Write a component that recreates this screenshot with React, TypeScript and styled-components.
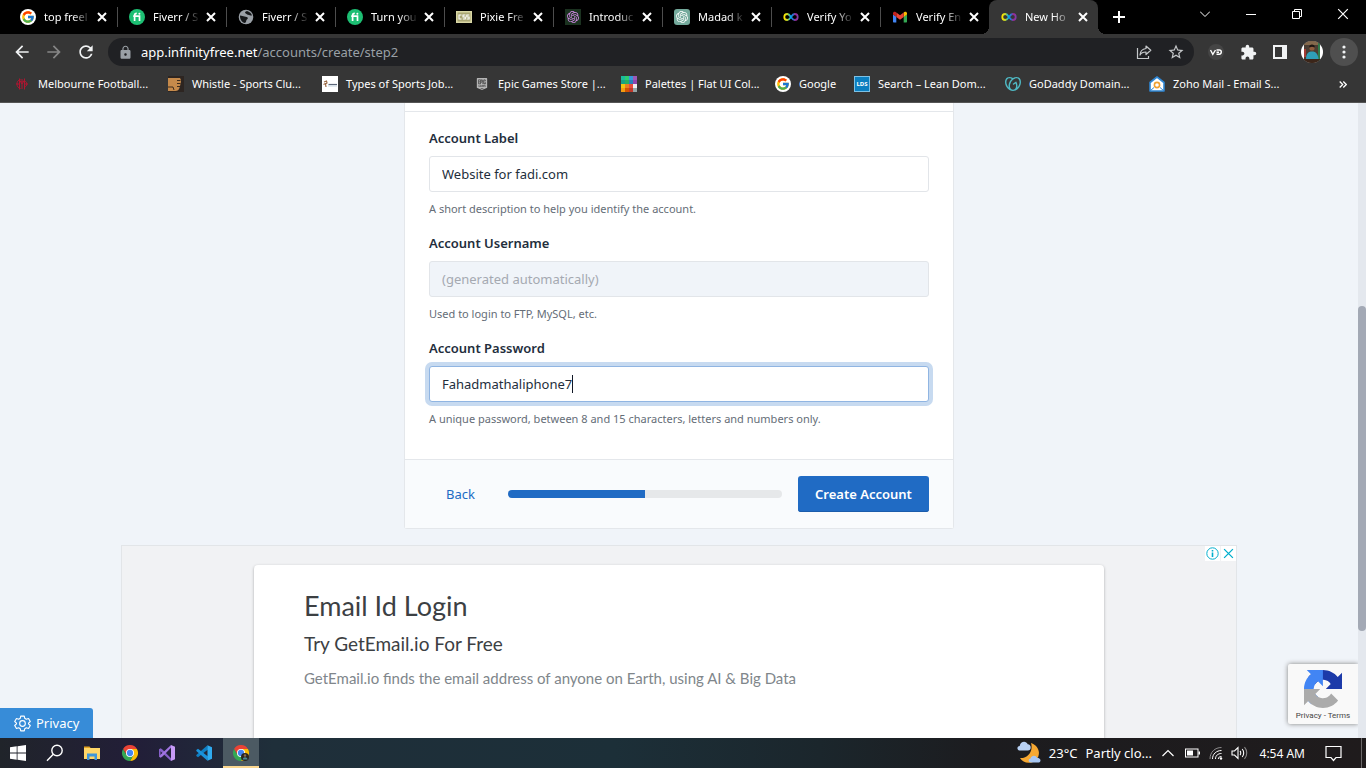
import React from "react";
import styled, { createGlobalStyle, css } from "styled-components";
import { FcGoogle } from "react-icons/fc";
import { SiOpenai, SiGodaddy, SiEpicgames } from "react-icons/si";
import { MdArrowBack, MdArrowForward, MdRefresh, MdLock, MdExtension, MdStarBorder } from "react-icons/md";

const ui = `"Noto Sans", "Open Sans", sans-serif`;

const GlobalStyle = createGlobalStyle`
  *, *::before, *::after { box-sizing: border-box; }
  body { margin: 0; font-family: ${ui}; }
  button, input { font: inherit; color: inherit; }
  button { border: 0; padding: 0; background: none; cursor: pointer; }
  a { color: inherit; text-decoration: none; }
  svg { display: block; flex: none; }
  h2, h3, p { margin: 0; font-weight: 400; }
`;

/* ---------- layout ---------- */

const Desktop = styled.div`
  display: flex;
  flex-direction: column;
  height: 100vh;
  overflow: hidden;
`;

const TabStrip = styled.div`
  display: flex;
  flex: none;
  height: 34px;
  padding-left: 8px;
  background: #000;
  color: #fff;
`;

const TabItem = styled.div<{ $active?: boolean; $plain?: boolean }>`
  position: relative;
  display: flex;
  align-items: center;
  flex: 0 1 109px;
  min-width: 0;
  padding: 0 8px 0 12px;
  ${(p) =>
    p.$active
      ? css`
          background: #363636;
          border-radius: 8px 8px 0 0;
          &::before, &::after {
            content: "";
            position: absolute;
            bottom: 0;
            width: 8px;
            height: 8px;
          }
          &::before { left: -8px; background: radial-gradient(circle at 0 0, transparent 8px, #363636 8px); }
          &::after { right: -8px; background: radial-gradient(circle at 100% 0, transparent 8px, #363636 8px); }
        `
      : css`
          &::after {
            content: "";
            position: absolute;
            right: -1px;
            top: 7px;
            width: 1px;
            height: 20px;
            background: ${p.$plain ? "transparent" : "#4d4d4d"};
          }
        `}
`;

const TabTitle = styled.span`
  flex: 1;
  min-width: 0;
  margin: 0 4px 0 8px;
  white-space: nowrap;
  font-size: 11px;
  line-height: 18px;
  mask-image: linear-gradient(to right, #000 60%, transparent 100%);
`;

const IconButton = styled.button<{ $w?: number; $h?: number }>`
  display: grid;
  place-items: center;
  flex: none;
  width: ${(p) => p.$w ?? 32}px;
  height: ${(p) => p.$h ?? 28}px;
`;

const WindowControls = styled.div`
  display: flex;
  margin-left: auto;
`;

const Toolbar = styled.div`
  display: flex;
  align-items: center;
  flex: none;
  height: 36px;
  padding: 0 6px;
  background: #363636;
  color: #f1f3f4;
`;

const AddressBar = styled.div`
  display: flex;
  align-items: center;
  flex: 1;
  min-width: 0;
  height: 28px;
  margin: 0 6px;
  padding: 0 2px 0 10px;
  border-radius: 14px;
  background: #202124;
`;

const Url = styled.div`
  flex: 1;
  min-width: 0;
  margin-left: 8px;
  overflow: hidden;
  white-space: nowrap;
  font-size: 13px;
  line-height: 20px;
  color: #9aa0a6;
  b { font-weight: 400; color: #fff; }
`;

const MenuDot = styled.span`
  display: grid;
  place-items: center;
  width: 28px;
  height: 28px;
  border-radius: 50%;
  background: #4f4f4f;
`;

const Bookmarks = styled.nav`
  display: flex;
  align-items: center;
  flex: none;
  height: 33px;
  padding: 0 7px 4px 14px;
  background: #363636;
  border-bottom: 1px solid #555;
  color: #fff;
  font-size: 11px;
  line-height: 18px;
`;

const Bookmark = styled.a<{ $w: number }>`
  display: flex;
  align-items: center;
  gap: 8px;
  flex: 0 1 ${(p) => p.$w}px;
  white-space: nowrap;
`;

const Viewport = styled.div`
  display: flex;
  flex: 1;
  min-height: 0;
  background: #f0f4f9;
`;

const Page = styled.main`
  position: relative;
  display: flex;
  flex-direction: column;
  align-items: center;
  flex: 1;
  min-width: 0;
  overflow: hidden;
`;

const ScrollTrack = styled.div`
  display: flex;
  flex-direction: column;
  flex: none;
  width: 8px;
  background: #e4e8ee;
  &::before { content: ""; flex: 203; }
  &::after { content: ""; flex: 107; }
`;

const ScrollThumb = styled.div`
  flex: 325;
  border-radius: 4px;
  background: #a3a9b5;
`;

/* ---------- form ---------- */

const FormCard = styled.form`
  flex: none;
  width: 100%;
  max-width: 550px;
  border: 1px solid #e4e7eb;
  border-top: 0;
  border-radius: 0 0 3px 3px;
  background: #fff;
  color: #232e3c;
  font-size: 14px;
  line-height: 20px;
`;

const CardTop = styled.div`
  height: 9px;
  border-bottom: 1px solid #e4e7eb;
`;

const CardBody = styled.div`
  padding: 16px 24px;
`;

const Field = styled.div`
  margin-bottom: 16px;
`;

const FieldLabel = styled.label`
  display: block;
  margin-bottom: 8px;
  font-size: 13px;
  font-weight: 600;
`;

const InputWrap = styled.div`
  position: relative;
`;

const TextInput = styled.input<{ $focused?: boolean }>`
  display: block;
  width: 100%;
  height: 36px;
  padding: 0 12px;
  border: 1px solid ${(p) => (p.$focused ? "#90b5e2" : "#e2e5e9")};
  border-radius: 3px;
  background: #fff;
  font-size: 13px;
  outline: 0;
  box-shadow: ${(p) => (p.$focused ? "0 0 0 4px #c7daf0" : "none")};
  &:disabled { background: #f0f4f9; }
  &::placeholder { color: #a5a9b1; opacity: 1; }
`;

const Caret = styled.span`
  position: absolute;
  left: 143px;
  top: 9px;
  width: 1px;
  height: 18px;
  background: #111827;
`;

const Hint = styled.p`
  margin-top: 8px;
  font-size: 11px;
  line-height: 17px;
  color: #656d77;
`;

const CardFooter = styled.div`
  display: flex;
  align-items: center;
  gap: 16px;
  padding: 16px 24px;
  border-top: 1px solid #e4e7eb;
  background: #f9fbfd;
`;

const BackLink = styled.a`
  width: 63px;
  padding: 8px 0;
  font-size: 13px;
  text-align: center;
  color: #206bc4;
`;

const Progress = styled.div`
  flex: 1;
  height: 8px;
  border-radius: 4px;
  overflow: hidden;
  background: #e6e8ea;
`;

const ProgressBar = styled.div`
  height: 100%;
  background: #206bc4;
`;

const SubmitButton = styled.button`
  flex: none;
  width: 131px;
  height: 36px;
  border-radius: 3px;
  background: #206bc4;
  color: #fff;
  font-size: 13px;
  font-weight: 600;
  white-space: nowrap;
  box-shadow: inset 0 -1px 0 #1b5cab;
`;

/* ---------- advert ---------- */

const Ad = styled.section`
  position: relative;
  display: flex;
  justify-content: center;
  flex: 1;
  width: calc(100% - 24px);
  max-width: 1116px;
  margin-top: 16px;
  padding-top: 19px;
  border: 1px solid #e2e5e8;
  border-bottom: 0;
  background: #f1f2f4;
`;

const AdCard = styled.a`
  display: block;
  width: 100%;
  max-width: 850px;
  padding: 23px 50px;
  border-radius: 4px 4px 0 0;
  background: #fff;
  box-shadow: 0 1px 3px rgba(0, 0, 0, 0.3);
  font-family: Lato, sans-serif;
  color: #3c4043;
`;

const AdTitle = styled.h2`
  font-size: 27px;
  line-height: 36px;
`;

const AdSubtitle = styled.h3`
  margin-top: 8px;
  font-size: 19px;
  line-height: 24px;
`;

const AdText = styled.p`
  margin-top: 12px;
  font-size: 15px;
  line-height: 20px;
  color: #80868b;
`;

const AdTools = styled.div`
  position: absolute;
  top: 0;
  right: 0;
  display: flex;
  gap: 1px;
`;

const AdTool = styled.button`
  display: grid;
  place-items: center;
  width: 15px;
  height: 15px;
  background: #fff;
`;

/* ---------- floating widgets ---------- */

const PrivacyButton = styled.button`
  position: absolute;
  left: 0;
  bottom: 0;
  display: flex;
  align-items: center;
  gap: 5px;
  height: 30px;
  padding: 0 14px;
  border-radius: 0 3px 0 0;
  background: #378cd8;
  color: #fff;
  font-size: 13px;
`;

const Recaptcha = styled.div`
  position: absolute;
  right: 0;
  bottom: 14px;
  display: flex;
  flex-direction: column;
  align-items: center;
  width: 70px;
  height: 60px;
  padding-top: 6px;
  border-radius: 2px 0 0 2px;
  background: #f9f9f9;
  box-shadow: 0 0 5px #808080;
  font-family: Roboto, sans-serif;
  font-size: 8px;
  line-height: 12px;
  color: #444;
  p { margin-top: 2px; }
`;

/* ---------- taskbar ---------- */

const Taskbar = styled.footer`
  display: flex;
  flex: none;
  height: 30px;
  color: #fff;
  background: linear-gradient(to right, #20242a 0, #221e38 10%, #1f2f3a 20%, #1c2f38 45%, #1b262c 60%, #1c1c1f 72%, #1f1b1c 100%);
`;

const TaskButton = styled.button<{ $w: number; $active?: boolean }>`
  display: grid;
  place-items: center;
  flex: none;
  width: ${(p) => p.$w}px;
  background: ${(p) => (p.$active ? "#4c5a63" : "none")};
  box-shadow: ${(p) => (p.$active ? "inset 0 -2px 0 #fcd890" : "none")};
`;

const Tray = styled.div`
  display: flex;
  align-items: center;
  margin-left: auto;
  padding-right: 4px;
`;

const Weather = styled.button`
  display: flex;
  align-items: center;
  gap: 8px;
  margin-right: 4px;
  font-size: 13px;
  white-space: nowrap;
`;

const Clock = styled.time`
  width: 54px;
  font-size: 12px;
  text-align: right;
  white-space: nowrap;
`;

const ShowDesktop = styled.span`
  width: 1px;
  height: 30px;
  background: #6b6869;
`;

/* ---------- icons ---------- */

const GoogleIcon = () => (
  <svg width="16" height="16" viewBox="0 0 16 16">
    <circle cx="8" cy="8" r="8" fill="#fff" />
    <FcGoogle x="1" y="1" size={14} />
  </svg>
);

const FiverrIcon = () => (
  <svg width="16" height="16" viewBox="0 0 16 16">
    <circle cx="8" cy="8" r="8" fill="#1dbf73" />
    <path d="M5.600 12V6.200c0-1.300.8-1.900 2.200-1.900M4.200 7.200h6.300V12" fill="none" stroke="#fff" strokeWidth="1.700" />
    <circle cx="10.400" cy="4.700" r="1" fill="#fff" />
  </svg>
);

const GlobeIcon = () => (
  <svg width="16" height="16" viewBox="0 0 16 16">
    <circle cx="8" cy="8" r="7.300" fill="#9aa0a6" />
    <path
      d="M2 6.500c2 .2 3 .8 4.500 1 1.500.3 3 .3 3.300 1.500.2 1.300-1.300 1.300-1.500 2.500-.1 1 -.6 2-1.300 2.500C4 13.500 1.800 10.500 2 6.500zM9 2c-1.800.5-2.500 1.500-1.500 2.300.8.600 1.300 1.200 2.500 1.500 1.500.2 2.500.9 4 .7C13.500 4.500 11.500 2.500 9 2z"
      fill="#16181a"
    />
  </svg>
);

const CssIcon = () => (
  <svg width="16" height="12" viewBox="0 0 16 12">
    <rect width="16" height="12" fill="#d9d7a5" />
    <rect x="1.500" y="1.500" width="13" height="9" fill="#a9a673" />
    <path d="M5.500 4H3v4h2.500M9.500 4H7v2h2.300v2H6.800M13.300 4h-2.500v2h2.300v2h-2.500" fill="none" stroke="#fff" strokeWidth="1.100" />
  </svg>
);

const AiIcon = ({ bg, fg, round }: { bg: string; fg: string; round?: boolean }) => (
  <svg width="16" height="16" viewBox="0 0 16 16">
    <rect width="16" height="16" rx={round ? 3 : 0} fill={bg} />
    <SiOpenai x="2" y="2" size={12} color={fg} />
  </svg>
);

const InfinityIcon = ({ id }: { id: string }) => (
  <svg width="16" height="16" viewBox="0 0 16 16">
    <defs>
      <linearGradient id={id} x1="0" x2="1" y1="0" y2="0">
        <stop offset="0" stopColor="#ffe600" />
        <stop offset="0.250" stopColor="#b8d432" />
        <stop offset="0.450" stopColor="#00aeef" />
        <stop offset="0.650" stopColor="#2e6fd0" />
        <stop offset="0.850" stopColor="#a3238e" />
        <stop offset="1" stopColor="#7d3fa8" />
      </linearGradient>
    </defs>
    <path
      d="M8 8C6.700 6 5.700 5 4.300 5a3 3 0 0 0 0 6C5.700 11 6.700 10 8 8s2.300-3 3.700-3a3 3 0 0 1 0 6C10.300 11 9.300 10 8 8z"
      fill="none"
      stroke={`url(#${id})`}
      strokeWidth="1.800"
    />
  </svg>
);

const GmailIcon = () => (
  <svg width="16" height="16" viewBox="0 0 16 16">
    <path d="M1 5.500v7c0 .6.400 1 1 1h2.300V7.500z" fill="#4285f4" />
    <path d="M15 5.500v7c0 .6-.4 1-1 1h-2.300V7.500z" fill="#34a853" />
    <path d="M11.700 3.500v4.500L15 5.500V4.300c0-1.500-1.500-2.100-2.600-1.300z" fill="#fbbc04" />
    <path d="M4.300 8V3.500L8 6.300l3.700-2.800V8L8 10.800z" fill="#ea4335" />
    <path d="M1 4.300v1.200L4.300 8V3.500L3.600 3C2.500 2.200 1 2.800 1 4.300z" fill="#c5221f" />
  </svg>
);

const CloseIcon = ({ size = 10, w = 2, color = "#fff" }: { size?: number; w?: number; color?: string }) => (
  <svg width={size} height={size} viewBox="0 0 10 10">
    <path d="M1 1l8 8M9 1L1 9" stroke={color} strokeWidth={w} fill="none" />
  </svg>
);

const MelbourneIcon = () => (
  <svg width="16" height="16" viewBox="0 0 16 16" fill="none" stroke="#b01530" strokeWidth="1">
    <path d="M6.500 3.500C4 4 3 6 3 8s1 4 3.500 4.500M5.500 2.500v11M10.500 2.500v11M5.500 4L8 8l2.500-4M8 5v8M10.500 5c3 .5 3 5.500 0 6M2 8h3.500M10.500 8H14M8 3v3" />
  </svg>
);

const WhistleIcon = () => (
  <svg width="16" height="16" viewBox="0 0 16 16">
    <rect width="16" height="16" fill="#2d2521" />
    <path d="M0 2h12c1.500 2 1 4 .5 6s-.5 3-1.500 5-3 2-5 2H0z" fill="#c58a4b" />
    <path d="M0 11h5l1 3M9 4.500h3.500M9 7.500h3.500M9 10.500h3" stroke="#1c1512" fill="none" strokeWidth=".8" />
  </svg>
);

const SportsJobIcon = () => (
  <svg width="16" height="16" viewBox="0 0 16 16">
    <rect width="16" height="16" fill="#fff" />
    <path d="M2 6l2.500-1L5 7 3.500 8 4 11M1.500 8.500l2-1" stroke="#9b6a45" fill="none" strokeWidth="1.200" />
    <path d="M6.500 8.500h8.500" stroke="#5c6678" strokeWidth="1.200" />
    <path d="M6 10h9" stroke="#b9cbda" strokeWidth=".8" />
  </svg>
);

const swatches = [
  "#1abc9c", "#2ecc71", "#3498db", "#9b59b6",
  "#16a085", "#27ae60", "#2980b9", "#8e44ad",
  "#f1c40f", "#e67e22", "#e74c3c", "#ecf0f1",
  "#f39c12", "#d35400", "#c0392b", "#95a5a6",
];

const PaletteIcon = () => (
  <svg width="16" height="16" viewBox="0 0 16 16">
    {swatches.map((c, i) => (
      <rect key={c} x={(i % 4) * 4} y={Math.floor(i / 4) * 4} width="4" height="4" fill={c} />
    ))}
  </svg>
);

const Lds = styled.span`
  display: grid;
  place-items: center;
  flex: none;
  width: 16px;
  height: 16px;
  border: 1px solid #7cc0e4;
  background: #0b7fc0;
  font-size: 6px;
  line-height: 8px;
  font-weight: 700;
`;

const ZohoIcon = () => (
  <svg width="16" height="16" viewBox="0 0 16 16">
    <path d="M1 6.500L8 1l7 5.500V15H1z" fill="#fff" stroke="#2f86d2" strokeWidth="1.600" strokeLinejoin="round" />
    <circle cx="8" cy="9" r="2.600" fill="none" stroke="#f0a030" strokeWidth="1.600" />
    <path d="M1.500 14.500L5 11.500M14.500 14.500L11 11.500" stroke="#2f86d2" />
  </svg>
);

const ShareIcon = () => (
  <svg width="16" height="16" viewBox="0 0 16 16" fill="none" stroke="#c4c7c9" strokeWidth="1.200">
    <path d="M1.500 4v10.500h11V12" />
    <path d="M10 2l4.800 4.300L10 10.500V8C7 8 5 9 4 11c.2-3.500 2.200-6 6-6.500z" strokeLinejoin="round" />
  </svg>
);

const VdIcon = () => (
  <svg width="16" height="16" viewBox="0 0 16 16">
    <circle cx="8" cy="8" r="8" fill="#454545" />
    <path d="M2.500 6l2.300 4.300L7.500 6M8.500 6h2.700c2.800 0 2.800 4.200 0 4.200H8.500M8.500 8.200h2.500" fill="none" stroke="#fff" strokeWidth="1.400" />
  </svg>
);

const PanelIcon = () => (
  <svg width="14" height="14" viewBox="0 0 14 14">
    <path d="M0 0h14v14H0zM2 2v10h7V2z" fill="#f1f3f4" fillRule="evenodd" />
  </svg>
);

const AvatarIcon = () => (
  <svg width="22" height="22" viewBox="0 0 22 22">
    <defs>
      <clipPath id="avatar"><circle cx="11" cy="11" r="11" /></clipPath>
    </defs>
    <g clipPath="url(#avatar)">
      <rect width="22" height="22" fill="#fff" />
      <rect x="3" width="16" height="22" fill="#4a3d33" />
      <path d="M3 0h16v4H3z" fill="#84694c" />
      <path d="M3 8h2v8H3z" fill="#a33b34" />
      <path d="M17 2h2v18h-2z" fill="#2f7a4a" />
      <circle cx="11" cy="7" r="2.600" fill="#8d5c3d" />
      <path d="M8.200 6.500c-.5-4 6-4 5.600 0l-2.800-.8z" fill="#1d1512" />
      <path d="M5 18c0-5 2-7.500 6-7.500s6 2.500 6.500 7.500z" fill="#2f9fb8" />
      <path d="M3 18h16v4H3z" fill="#3b2519" />
    </g>
  </svg>
);

const ChromeIcon = ({ badge }: { badge?: boolean }) => (
  <svg width="16" height="16" viewBox="1 1 22 22">
    <path d="M12 12V6.500h9.530A11 11 0 0 0 2.470 6.500l4.770 8.250z" fill="#ea4335" />
    <path d="M12 12V6.500h9.530A11 11 0 0 1 12 23l4.760-8.250z" fill="#fbbc05" />
    <path d="M12 12l-4.760 2.750L2.470 6.500A11 11 0 0 0 12 23l4.760-8.250z" fill="#34a853" />
    <circle cx="12" cy="12" r="5.500" fill="#fff" />
    <circle cx="12" cy="12" r="4.300" fill="#4285f4" />
    {badge && (
      <>
        <circle cx="17.500" cy="17.500" r="5.500" fill="#2a2622" />
        <circle cx="17.500" cy="15.500" r="1.700" fill="#8d6a50" />
        <path d="M14.500 21c0-4 6-4 6.500 0z" fill="#4b8794" />
      </>
    )}
  </svg>
);

const WindowsIcon = () => (
  <svg width="16" height="16" viewBox="0 0 16 16" fill="#fff">
    <path d="M0 2.200L6.700 1.300V7.600H0zM7.500 1.200L16 0v7.600H7.500zM0 8.400h6.700v6.300L0 13.800zM7.500 8.400H16V16l-8.500-1.200z" />
  </svg>
);

const SearchIcon = () => (
  <svg width="18" height="18" viewBox="0 0 18 18" fill="none" stroke="#fff" strokeWidth="1.400">
    <circle cx="11" cy="6.500" r="5.200" />
    <path d="M7.300 10.300L1 16.800" />
  </svg>
);

const FolderIcon = () => (
  <svg width="16" height="16" viewBox="0 0 16 16">
    <path d="M0 1.500h5.500l1.500 2H0z" fill="#e3a321" />
    <path d="M0 3h16v11H0z" fill="#ffd768" />
    <path d="M3 15V8.500h10V15h-2.500v-3.500h-5V15z" fill="#3f97d9" />
  </svg>
);

const VisualStudioIcon = () => (
  <svg width="16" height="16" viewBox="0 0 16 16">
    <path d="M0 4.300l1.700-1 2 1.400L12 13.200V16L1.500 6.200v3.900L0 11.700z" fill="#8660c9" />
    <path d="M0 11.700l1.700 1 2-1.400L12 2.800V0L1.500 9.800z" fill="#a074e0" />
    <path d="M12 0l4 1.800v12.400L12 16z" fill="#c79bf7" />
  </svg>
);

const VsCodeIcon = () => (
  <svg width="16" height="16" viewBox="0 0 16 16">
    <path d="M11.500 0.300L12 4.600 2 12.200.3 10.900v-.8z" fill="#0f7fc4" />
    <path d="M11.500 15.700L12 11.400 2 3.800.3 5.100v.8z" fill="#1a93dc" />
    <path d="M11.500.2L16 2.200v11.600l-4.500 2z" fill="#2fabf0" />
  </svg>
);

const WeatherIcon = () => (
  <svg width="24" height="24" viewBox="0 0 24 24">
    <path d="M14 2c8 2.500 10.500 11.500 5 17-5 4.500-13 3.500-16-2C11 17.500 16.500 10 14 2z" fill="#f6a832" />
    <path d="M3.500 9.500c-4 0-4-4.300-.8-4.600C3.500-.2 9.500-.3 10.700 3.300c4 0 4 6.200 0 6.200z" fill="#b9d2f5" />
    <path d="M14 21.500c-3 0-3-3.800-.4-4 .7-3.600 5.400-3.600 6.400-.8 4.500.2 4.500 4.800 1 4.800z" fill="#a7c6f2" />
  </svg>
);

const BatteryIcon = () => (
  <svg width="15" height="10" viewBox="0 0 15 10">
    <rect x="0.500" y="1" width="12.500" height="8" fill="none" stroke="#fff" />
    <rect x="2" y="2.500" width="6" height="5" fill="#fff" />
    <rect x="13.500" y="3.500" width="1.500" height="3" fill="#fff" />
  </svg>
);

const WifiIcon = () => (
  <svg width="14" height="14" viewBox="0 0 14 14" fill="none" stroke="#fff" strokeWidth="1">
    <path d="M1 13C1 6 6 1.500 12.500 1.500" stroke="#8d8b8c" />
    <path d="M3.500 13c0-5 4-8.500 9-8.500M6.500 13c0-3.500 2.500-5.500 6-5.500M9.300 13c0-1.700 1.200-2.500 3.200-2.500" />
    <circle cx="12" cy="12.500" r="1.200" fill="#fff" stroke="none" />
  </svg>
);

const VolumeIcon = () => (
  <svg width="17" height="14" viewBox="0 0 17 14" fill="none" stroke="#fff" strokeWidth="1.100">
    <path d="M1 5h2.500L7 1.500v11L3.500 9H1z" />
    <path d="M9 5c1 1 1 3 0 4M11.200 3c2 2.200 2 5.800 0 8" />
    <path d="M13.500 1.200c3 3.300 3 8.300 0 11.600" stroke="#8d8b8c" />
  </svg>
);

const NoticeIcon = () => (
  <svg width="17" height="17" viewBox="0 0 17 17" fill="none" stroke="#fff" strokeWidth="1.200">
    <path d="M1 1.500h15v11h-5l-2.500 3-2.500-3H1z" />
  </svg>
);

const GearIcon = () => (
  <svg width="17" height="17" viewBox="0 0 24 24" fill="none" stroke="#fff" strokeWidth="1.600" strokeLinejoin="round">
    <path d="M9.500 1.500h5l.7 3.200 2.100 1.200 3.200-1 2.500 4.300-2.500 2.200v1.200l2.500 2.200-2.500 4.300-3.200-1-2.100 1.200-.7 3.200h-5l-.7-3.200-2.100-1.200-3.200 1L1 14.800l2.500-2.200v-1.200L1 9.200l2.500-4.300 3.200 1 2.100-1.200z" />
    <circle cx="12" cy="12" r="4" />
  </svg>
);

const CaptchaIcon = () => (
  <svg width="38" height="38" viewBox="0 0 64 64">
    <path fill="#1c3aa9" d="M64 31.955l-.033-1.370V4.687l-7.160 7.160C50.948 4.674 42.033.093 32.050.093c-10.400 0-19.622 4.960-25.458 12.640l11.736 11.860a15.550 15.550 0 0 1 4.754-5.334c2.050-1.600 4.952-2.906 8.968-2.906.485 0 .860.057 1.135.163 4.976.393 9.288 3.140 11.828 7.124l-8.307 8.307L64 31.953" />
    <path fill="#4285f4" d="M31.862.094l-1.370.033H4.594l7.160 7.160C4.580 13.147 0 22.060 0 32.046c0 10.400 4.960 19.622 12.640 25.458L24.500 45.768a15.550 15.550 0 0 1-5.334-4.754c-1.600-2.050-2.906-4.952-2.906-8.968 0-.485.057-.860.163-1.135.393-4.976 3.140-9.288 7.124-11.828l8.307 8.307L31.860.095" />
    <path fill="#ababab" d="M.001 32.045l.033 1.370v25.898l7.160-7.160c5.860 7.173 14.774 11.754 24.760 11.754 10.400 0 19.622-4.960 25.458-12.640l-11.736-11.860a15.550 15.550 0 0 1-4.754 5.334c-2.050 1.600-4.952 2.906-8.968 2.906-.485 0-.860-.057-1.135-.163-4.976-.393-9.288-3.140-11.828-7.124l8.307-8.307c-10.522.040-22.400.066-27.295-.005" />
  </svg>
);

/* ---------- data ---------- */

const tabs = [
  { title: "top freel", icon: <GoogleIcon /> },
  { title: "Fiverr / S", icon: <FiverrIcon /> },
  { title: "Fiverr / S", icon: <GlobeIcon /> },
  { title: "Turn you", icon: <FiverrIcon /> },
  { title: "Pixie Fre", icon: <CssIcon /> },
  { title: "Introduc", icon: <AiIcon bg="#1b3220" fg="#d68bea" /> },
  { title: "Madad k", icon: <AiIcon bg="#74aa9c" fg="#fff" round /> },
  { title: "Verify Yo", icon: <InfinityIcon id="inf-a" /> },
  { title: "Verify En", icon: <GmailIcon /> },
  { title: "New Ho", icon: <InfinityIcon id="inf-b" /> },
];

const bookmarks = [
  { title: "Melbourne Football...", icon: <MelbourneIcon />, w: 154 },
  { title: "Whistle - Sports Clu...", icon: <WhistleIcon />, w: 154 },
  { title: "Types of Sports Job...", icon: <SportsJobIcon />, w: 152 },
  { title: "Epic Games Store |...", icon: <SiEpicgames size={12} color="#b5b5b5" style={{ width: 16 }} />, w: 147 },
  { title: "Palettes | Flat UI Col...", icon: <PaletteIcon />, w: 154 },
  { title: "Google", icon: <GoogleIcon />, w: 79 },
  { title: "Search – Lean Dom...", icon: <Lds>LDS</Lds>, w: 151 },
  { title: "GoDaddy Domain...", icon: <SiGodaddy size={16} color="#4fb9c4" />, w: 144 },
  { title: "Zoho Mail - Email S...", icon: <ZohoIcon />, w: 150 },
];

export default function App() {
  return (
    <>
      <GlobalStyle />
      <Desktop>
        <TabStrip>
          {tabs.map((t, i) => (
            <TabItem key={i} $active={i === 9} $plain={i === 8}>
              {t.icon}
              <TabTitle>{t.title}</TabTitle>
              <IconButton $w={14} $h={16} aria-label="Close tab">
                <CloseIcon />
              </IconButton>
            </TabItem>
          ))}
          <IconButton $w={42} $h={34} aria-label="New tab">
            <svg width="12" height="12" viewBox="0 0 12 12">
              <path d="M6 0v12M0 6h12" stroke="#fff" strokeWidth="2" />
            </svg>
          </IconButton>
          <WindowControls>
            <IconButton $w={46} aria-label="Search tabs">
              <svg width="10" height="10" viewBox="0 0 10 10">
                <path d="M0 2.500l5 5 5-5" stroke="#fff" fill="none" />
              </svg>
            </IconButton>
            <IconButton $w={46} aria-label="Minimize">
              <svg width="10" height="10" viewBox="0 0 10 10">
                <path d="M0 5.500h10" stroke="#fff" />
              </svg>
            </IconButton>
            <IconButton $w={46} aria-label="Restore">
              <svg width="10" height="10" viewBox="0 0 10 10">
                <path d="M.5 2.500h7v7h-7zM2.500 2.500v-2h7v7h-2" stroke="#fff" fill="none" />
              </svg>
            </IconButton>
            <IconButton $w={46} aria-label="Close window">
              <CloseIcon size={12} w={1} />
            </IconButton>
          </WindowControls>
        </TabStrip>

        <Toolbar>
          <IconButton aria-label="Back"><MdArrowBack size={20} /></IconButton>
          <IconButton aria-label="Forward"><MdArrowForward size={20} color="#868686" /></IconButton>
          <IconButton aria-label="Reload"><MdRefresh size={20} /></IconButton>
          <AddressBar>
            <MdLock size={15} color="#9aa0a6" />
            <Url><b>app.infinityfree.net</b>/accounts/create/step2</Url>
            <IconButton aria-label="Share"><ShareIcon /></IconButton>
            <IconButton aria-label="Bookmark"><MdStarBorder size={18} color="#c4c7c9" /></IconButton>
          </AddressBar>
          <IconButton aria-label="Extension"><VdIcon /></IconButton>
          <IconButton aria-label="Extensions"><MdExtension size={17} /></IconButton>
          <IconButton aria-label="Side panel"><PanelIcon /></IconButton>
          <IconButton aria-label="Profile"><AvatarIcon /></IconButton>
          <IconButton aria-label="Menu">
            <MenuDot>
              <svg width="4" height="14" viewBox="0 0 4 14" fill="#f1f3f4">
                <circle cx="2" cy="2" r="1.600" />
                <circle cx="2" cy="7" r="1.600" />
                <circle cx="2" cy="12" r="1.600" />
              </svg>
            </MenuDot>
          </IconButton>
        </Toolbar>

        <Bookmarks>
          {bookmarks.map((b) => (
            <Bookmark key={b.title} href="#" $w={b.w}>
              {b.icon}
              {b.title}
            </Bookmark>
          ))}
          <WindowControls>
            <IconButton aria-label="More bookmarks">
              <svg width="8" height="7" viewBox="0 0 8 7">
                <path d="M.7.5l3 3-3 3M4.300.5l3 3-3 3" stroke="#fff" strokeWidth="1.300" fill="none" />
              </svg>
            </IconButton>
          </WindowControls>
        </Bookmarks>

        <Viewport>
          <Page>
            <FormCard onSubmit={(e) => e.preventDefault()}>
              <CardTop />
              <CardBody>
                <Field>
                  <FieldLabel htmlFor="label">Account Label</FieldLabel>
                  <TextInput id="label" type="text" defaultValue="Website for fadi.com" />
                  <Hint>A short description to help you identify the account.</Hint>
                </Field>
                <Field>
                  <FieldLabel htmlFor="username">Account Username</FieldLabel>
                  <TextInput id="username" type="text" placeholder="(generated automatically)" disabled />
                  <Hint>Used to login to FTP, MySQL, etc.</Hint>
                </Field>
                <Field>
                  <FieldLabel htmlFor="password">Account Password</FieldLabel>
                  <InputWrap>
                    <TextInput id="password" type="text" defaultValue="Fahadmathaliphone7" $focused />
                    <Caret />
                  </InputWrap>
                  <Hint>A unique password, between 8 and 15 characters, letters and numbers only.</Hint>
                </Field>
              </CardBody>
              <CardFooter>
                <BackLink href="#">Back</BackLink>
                <Progress>
                  <ProgressBar style={{ width: "50%" }} />
                </Progress>
                <SubmitButton type="submit">Create Account</SubmitButton>
              </CardFooter>
            </FormCard>

            <Ad>
              <AdCard href="#">
                <AdTitle>Email Id Login</AdTitle>
                <AdSubtitle>Try GetEmail.io For Free</AdSubtitle>
                <AdText>GetEmail.io finds the email address of anyone on Earth, using AI &amp; Big Data</AdText>
              </AdCard>
              <AdTools>
                <AdTool aria-label="Ad information">
                  <svg width="13" height="13" viewBox="0 0 13 13">
                    <circle cx="6.500" cy="6.500" r="5.700" fill="none" stroke="#00aecd" />
                    <path d="M6.500 5.500v4.500M6.500 3v1.500" stroke="#00aecd" strokeWidth="1.600" />
                  </svg>
                </AdTool>
                <AdTool aria-label="Close ad">
                  <CloseIcon size={11} w={1.2} color="#00aecd" />
                </AdTool>
              </AdTools>
            </Ad>

            <PrivacyButton>
              <GearIcon />
              Privacy
            </PrivacyButton>
            <Recaptcha>
              <CaptchaIcon />
              <p><a href="#">Privacy</a> - <a href="#">Terms</a></p>
            </Recaptcha>
          </Page>
          <ScrollTrack>
            <ScrollThumb />
          </ScrollTrack>
        </Viewport>

        <Taskbar>
          <TaskButton $w={36} aria-label="Start"><WindowsIcon /></TaskButton>
          <TaskButton $w={37} aria-label="Search"><SearchIcon /></TaskButton>
          <TaskButton $w={38} aria-label="File Explorer"><FolderIcon /></TaskButton>
          <TaskButton $w={37} aria-label="Chrome"><ChromeIcon /></TaskButton>
          <TaskButton $w={37} aria-label="Visual Studio"><VisualStudioIcon /></TaskButton>
          <TaskButton $w={38} aria-label="Visual Studio Code"><VsCodeIcon /></TaskButton>
          <TaskButton $w={36} $active aria-label="Chrome window"><ChromeIcon badge /></TaskButton>
          <Tray>
            <Weather>
              <WeatherIcon />
              <span>23°C</span>
              <span>Partly clo...</span>
            </Weather>
            <IconButton $w={24} aria-label="Hidden icons">
              <svg width="12" height="8" viewBox="0 0 12 8">
                <path d="M.5 7L6 1.500 11.500 7" stroke="#fff" strokeWidth="1.200" fill="none" />
              </svg>
            </IconButton>
            <IconButton $w={24} aria-label="Battery"><BatteryIcon /></IconButton>
            <IconButton $w={24} aria-label="Network"><WifiIcon /></IconButton>
            <IconButton $w={23} aria-label="Volume"><VolumeIcon /></IconButton>
            <Clock>4:54 AM</Clock>
            <IconButton $w={56} aria-label="Notifications"><NoticeIcon /></IconButton>
            <ShowDesktop />
          </Tray>
        </Taskbar>
      </Desktop>
    </>
  );
}
